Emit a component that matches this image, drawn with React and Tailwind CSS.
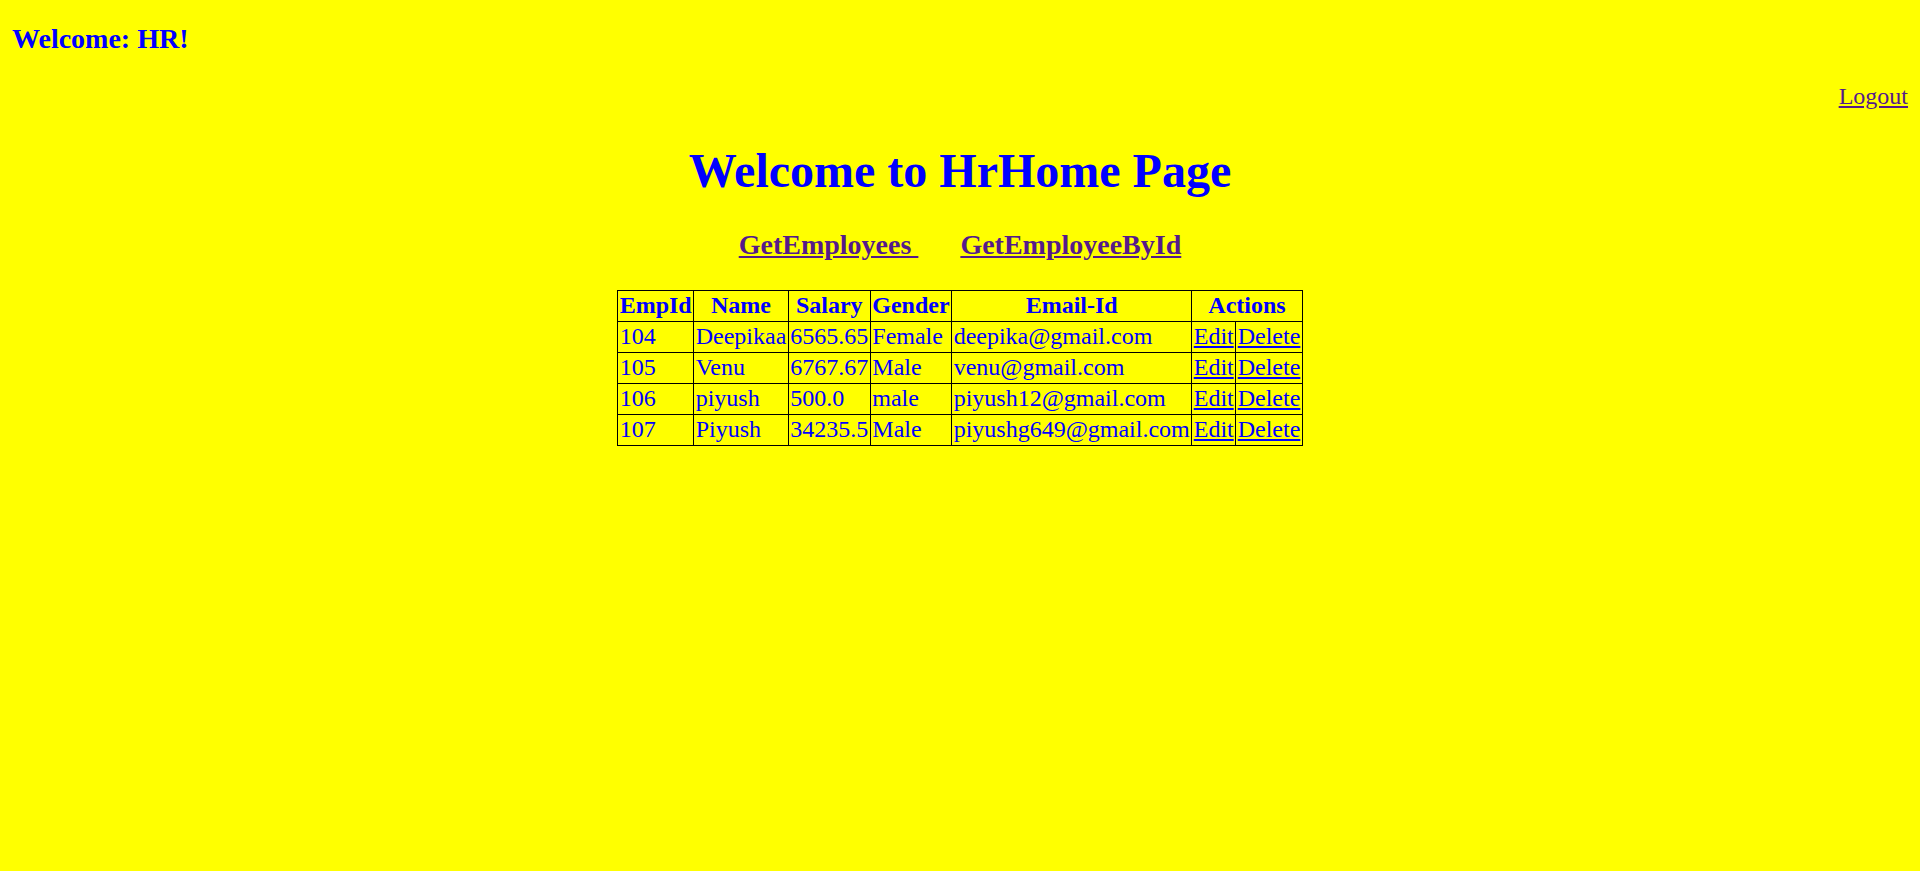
import React from 'react'

const employees = [
  { id: 104, name: 'Deepikaa', salary: '6565.65', gender: 'Female', email: 'deepika@gmail.com' },
  { id: 105, name: 'Venu', salary: '6767.67', gender: 'Male', email: 'venu@gmail.com' },
  { id: 106, name: 'piyush', salary: '500.0', gender: 'male', email: 'piyush12@gmail.com' },
  { id: 107, name: 'Piyush', salary: '34235.5', gender: 'Male', email: 'piyushg649@gmail.com' }
]

const headers = ['EmpId', 'Name', 'Salary', 'Gender', 'Email-Id']

const cell = 'border border-black px-[1.5px] pt-[1px] pb-[3px] leading-[26px] whitespace-nowrap'

const App = () => {
  return (
    <div className="min-h-[871px] w-full bg-[#ffff00] text-[#0000ff] font-['Liberation_Serif',serif]">
      {/* Top bar */}
      <div className="px-[12px] pt-[23px]">
        <h3 className="text-[28px] font-bold leading-[32px]">Welcome: HR!</h3>
      </div>

      <div className="flex justify-end px-[12px] mt-[27px]">
        <a href="#" className="text-[24px] leading-[28px] text-[#551a8b] underline">Logout</a>
      </div>

      {/* Title */}
      <h1 className="mt-[33px] text-center text-[48px] font-bold leading-[56px]">
        Welcome to HrHome Page
      </h1>

      <div className="mt-[30px] flex justify-center gap-[42px] text-[28px] font-bold leading-[32px]">
        <a href="#" className="text-[#551a8b] underline whitespace-pre">GetEmployees </a>
        <a href="#" className="text-[#551a8b] underline">GetEmployeeById</a>
      </div>

      {/* Employee table */}
      <div className="mt-[29px] flex justify-center">
        <table className="border-collapse border border-black text-[24px]">
          <thead>
            <tr>
              {headers.map(h => (
                <th key={h} className={`${cell} font-bold text-center`}>{h}</th>
              ))}
              <th colSpan={2} className={`${cell} font-bold text-center`}>Actions</th>
            </tr>
          </thead>
          <tbody>
            {employees.map(emp => (
              <tr key={emp.id}>
                <td className={cell}>{emp.id}</td>
                <td className={cell}>{emp.name}</td>
                <td className={cell}>{emp.salary}</td>
                <td className={cell}>{emp.gender}</td>
                <td className={cell}>{emp.email}</td>
                <td className={cell}>
                  <a href="#" className="text-[#0000ff] underline">Edit</a>
                </td>
                <td className={cell}>
                  <a href="#" className="text-[#0000ff] underline">Delete</a>
                </td>
              </tr>
            ))}
          </tbody>
        </table>
      </div>
    </div>
  )
}

export default App
